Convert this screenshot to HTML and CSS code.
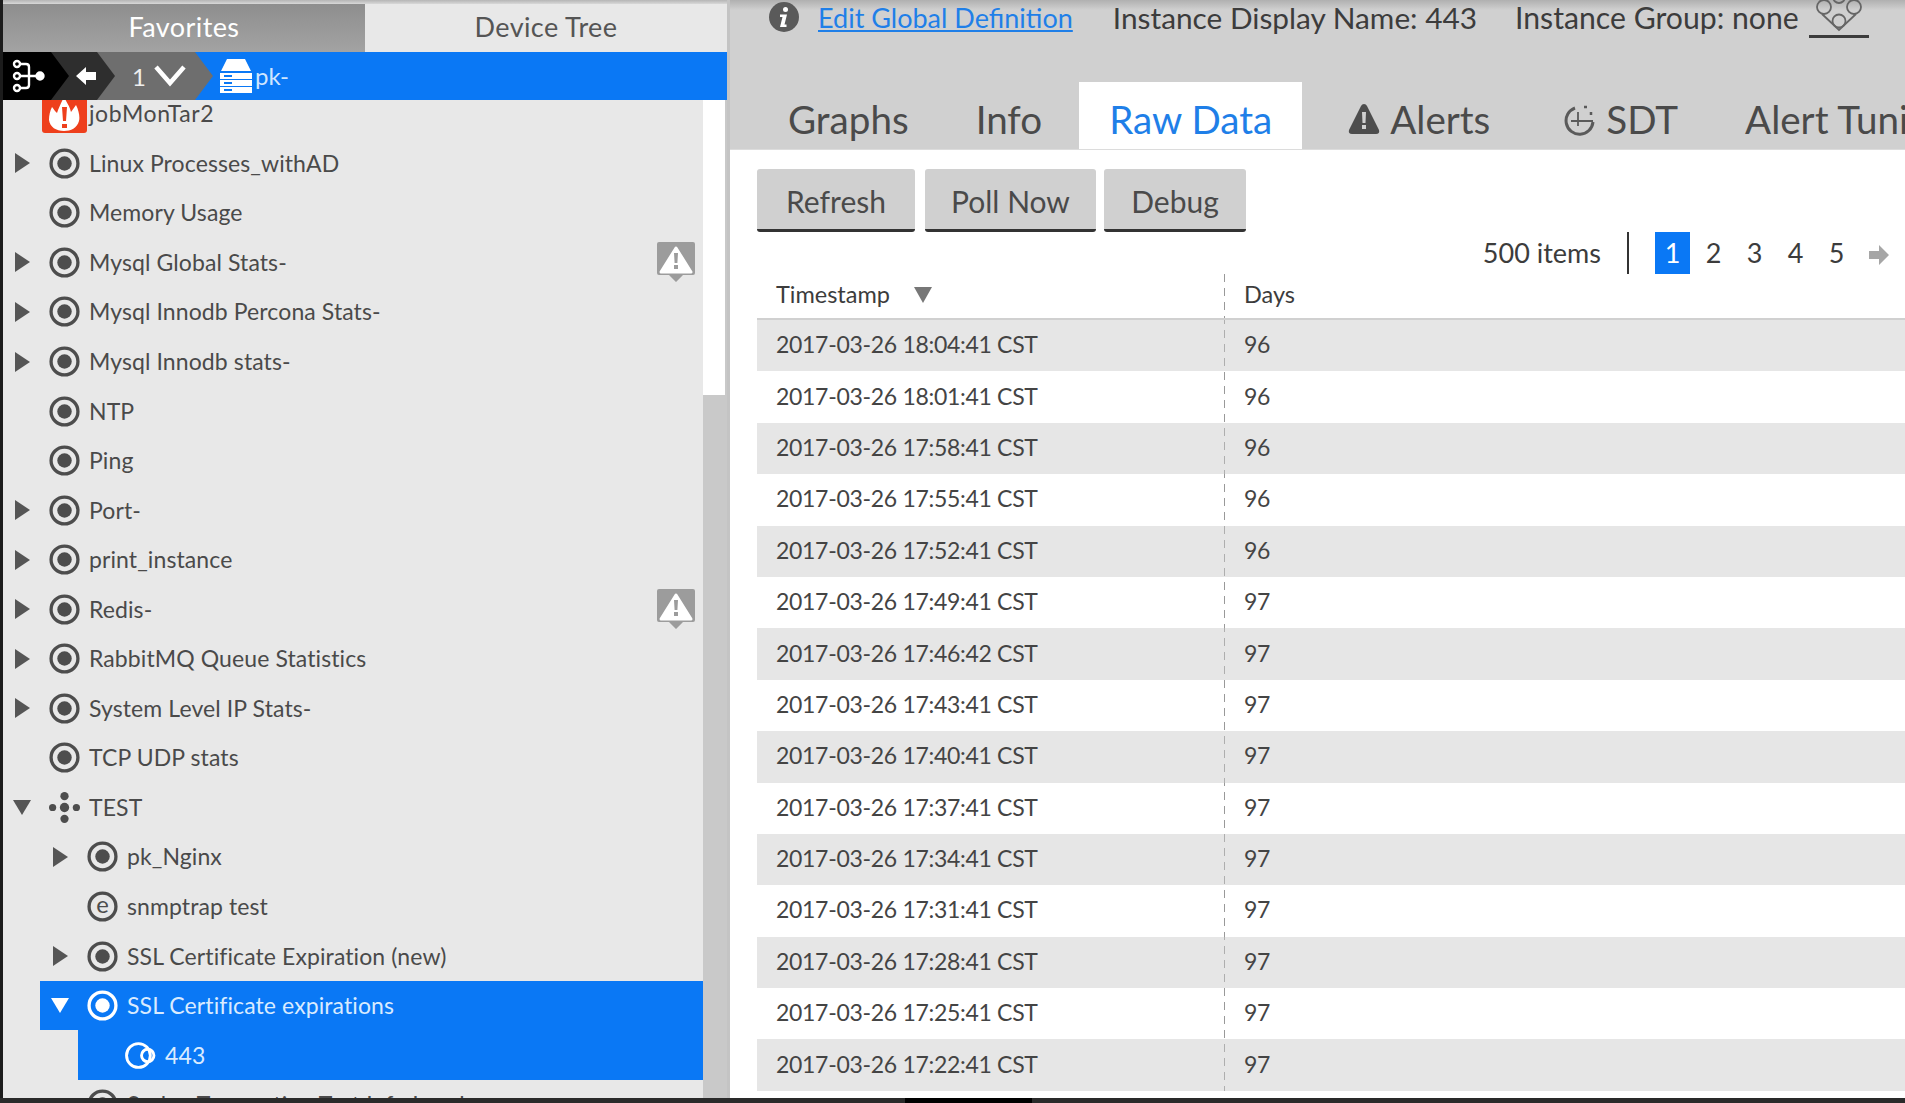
FILE: index.html
```html
<!DOCTYPE html>
<html lang="en">
<head>
    <meta charset="UTF-8">
    <title>Raw Data</title>
    <link rel="stylesheet" href="styles.css">
</head>
<body>
    <svg class="defs" width="0" height="0">
        <symbol id="dp" viewBox="0 0 30 30">
            <circle cx="15" cy="15" r="13" fill="none" stroke="currentColor" stroke-width="3.2"/>
            <circle cx="15" cy="15" r="7" fill="currentColor"/>
        </symbol>
        <symbol id="alert" viewBox="0 0 38 40">
            <path d="M0 2q0-2 2-2h34q2 0 2 2v29q0 2-2 2h-10l-7 7-7-7H2q-2 0-2-2z" fill="#9c9c9c"/>
            <path d="M19 6 34 30H4z" fill="#fff" stroke="#fff" stroke-width="3" stroke-linejoin="round"/>
            <path d="M17 11h4l-.6 10h-2.800zM17 23h4v4h-4z" fill="#9c9c9c"/>
        </symbol>
    </svg>

    <aside class="sidebar">
        <div class="side-tabs">
            <div class="side-tab side-tab-on">Favorites</div>
            <div class="side-tab">Device Tree</div>
        </div>
        <div class="crumbs">
            <div class="crumb crumb-root">
                <svg width="34" height="34" viewBox="0 0 34 34" fill="none" stroke="#fff" stroke-width="2.400">
                    <circle cx="5" cy="5" r="3"/><circle cx="5" cy="17" r="3"/><circle cx="5" cy="29" r="3"/>
                    <path d="M8 5h6q3 0 3 3v18q0 3-3 3H8M8 17h20"/><circle cx="28" cy="17" r="3.500" fill="#fff"/>
                </svg>
            </div>
            <div class="crumb crumb-back">
                <svg width="20" height="20" viewBox="0 0 20 20"><path d="M0 10 10 1v5h10v8H10v5z" fill="#fff"/></svg>
            </div>
            <div class="crumb crumb-count">
                <span>1</span>
                <svg width="32" height="24" viewBox="0 0 32 24"><path d="M2 3 16 19 30 3" fill="none" stroke="#fff" stroke-width="4.500"/></svg>
            </div>
            <div class="crumb-host">
                <svg width="32" height="34" viewBox="0 0 32 34" fill="#fff">
                    <path d="M7 0h18l6 12H1zM0 14h32v6H0zM0 21h32v6H0zM0 28h32v6H0z"/>
                    <path d="M4 16h8v2H4zM4 23h8v2H4zM4 30h8v2H4z" fill="#0a78f5"/>
                </svg>
                <span>pk-</span>
            </div>
        </div>
        <div class="tree-wrap">
            <div class="tree">
                <div class="row row-first">
                    <svg class="fire" width="45" height="38" viewBox="0 0 45 38">
                        <path d="M0 0h45v35q0 3-3 3H3q-3 0-3-3z" fill="#ee3f1c"/>
                        <path d="M10 12C13 16 14 17 15 18 17 12 20 6 22 2 25 8 28 12 29 17L34 10C37 16 38 22 37 26 35 33 29 36 22 36 14 36 8 32 7 25 7 20 8 16 10 12z" fill="#fff"/>
                        <path d="M20 12h5l-1 14h-3zM20 29h5v4h-5z" fill="#ee3f1c"/>
                    </svg>
                    <span class="label label-job">jobMonTar2</span>
                </div>
                <div class="row"><span class="tri"></span><svg class="ico"><use href="#dp"/></svg><span class="label">Linux Processes_withAD</span></div>
                <div class="row"><span class="tri tri-none"></span><svg class="ico"><use href="#dp"/></svg><span class="label">Memory Usage</span></div>
                <div class="row"><span class="tri"></span><svg class="ico"><use href="#dp"/></svg><span class="label">Mysql Global Stats-</span><svg class="flag"><use href="#alert"/></svg></div>
                <div class="row"><span class="tri"></span><svg class="ico"><use href="#dp"/></svg><span class="label">Mysql Innodb Percona Stats-</span></div>
                <div class="row"><span class="tri"></span><svg class="ico"><use href="#dp"/></svg><span class="label">Mysql Innodb stats-</span></div>
                <div class="row"><span class="tri tri-none"></span><svg class="ico"><use href="#dp"/></svg><span class="label">NTP</span></div>
                <div class="row"><span class="tri tri-none"></span><svg class="ico"><use href="#dp"/></svg><span class="label">Ping</span></div>
                <div class="row"><span class="tri"></span><svg class="ico"><use href="#dp"/></svg><span class="label">Port-</span></div>
                <div class="row"><span class="tri"></span><svg class="ico"><use href="#dp"/></svg><span class="label">print_instance</span></div>
                <div class="row"><span class="tri"></span><svg class="ico"><use href="#dp"/></svg><span class="label">Redis-</span><svg class="flag"><use href="#alert"/></svg></div>
                <div class="row"><span class="tri"></span><svg class="ico"><use href="#dp"/></svg><span class="label">RabbitMQ Queue Statistics</span></div>
                <div class="row"><span class="tri"></span><svg class="ico"><use href="#dp"/></svg><span class="label">System Level IP Stats-</span></div>
                <div class="row"><span class="tri tri-none"></span><svg class="ico"><use href="#dp"/></svg><span class="label">TCP UDP stats</span></div>
                <div class="row">
                    <span class="tri tri-down"></span>
                    <svg class="ico" viewBox="0 0 30 30" fill="#4d4d4d">
                        <circle cx="15" cy="4" r="4"/><circle cx="15" cy="26" r="4"/><circle cx="15" cy="15" r="4.500"/>
                        <circle cx="3.500" cy="15" r="3.500"/><circle cx="26.500" cy="15" r="3.500"/>
                    </svg>
                    <span class="label">TEST</span>
                </div>
                <div class="row lvl2"><span class="tri"></span><svg class="ico"><use href="#dp"/></svg><span class="label">pk_Nginx</span></div>
                <div class="row lvl2">
                    <span class="tri tri-none"></span>
                    <svg class="ico" viewBox="0 0 30 30">
                        <circle cx="15" cy="15" r="13" fill="none" stroke="#4d4d4d" stroke-width="3.200"/>
                        <text x="15" y="21" text-anchor="middle" class="ico-e">e</text>
                    </svg>
                    <span class="label">snmptrap test</span>
                </div>
                <div class="row lvl2"><span class="tri"></span><svg class="ico"><use href="#dp"/></svg><span class="label">SSL Certificate Expiration (new)</span></div>
                <div class="row lvl2 row-sel"><span class="tri tri-down"></span><svg class="ico" viewBox="0 0 30 30"><circle cx="15" cy="15" r="13" fill="none" stroke="#fff" stroke-width="3.200"/><circle cx="15" cy="15" r="7" fill="#fff"/></svg><span class="label">SSL Certificate expirations</span></div>
                <div class="row lvl3 row-sel">
                    <svg class="ico" viewBox="0 0 30 30" fill="none" stroke="#fff" stroke-width="2.800">
                        <circle cx="13" cy="15" r="11.500"/><circle cx="22" cy="15" r="6"/>
                    </svg>
                    <span class="label">443</span>
                </div>
                <div class="row lvl2"><span class="tri tri-none"></span><svg class="ico"><use href="#dp"/></svg><span class="label">Syslog Transaction Test Info Level</span></div>
            </div>
            <div class="scroll"><div class="scroll-track"></div></div>
        </div>
    </aside>

    <main class="content">
        <div class="head">
            <div class="head-info">
                <svg class="info-ico" width="30" height="30" viewBox="0 0 30 30">
                    <circle cx="15" cy="15" r="15" fill="#5a5a5a"/>
                    <circle cx="16.500" cy="7.500" r="2.500" fill="#fff"/>
                    <path d="M11 12.500h7l-2.500 10h2v2.500h-6.500l2.500-10h-2.500z" fill="#fff"/>
                </svg>
                <a class="head-link" href="#">Edit Global Definition</a>
                <span class="head-text head-name">Instance Display Name: 443</span>
                <span class="head-text head-group">Instance Group: none</span>
                <span class="group-ico">
                    <svg width="60" height="34" viewBox="0 0 60 34" fill="none" stroke="#666" stroke-width="1.800">
                        <circle cx="30" cy="-3" r="6"/><circle cx="15" cy="7" r="7"/><circle cx="45" cy="7" r="7"/><circle cx="30" cy="21" r="6.500"/>
                        <path d="M13 14 30 30 47 14"/>
                    </svg>
                </span>
            </div>
            <nav class="tabs">
                <div class="tab">Graphs</div>
                <div class="tab">Info</div>
                <div class="tab tab-on">Raw Data</div>
                <div class="tab tab-alerts">
                    <svg width="32" height="30" viewBox="0 0 32 30"><path d="M16 0q2 0 3 2l12 24q1 4-3 4H4q-4 0-3-4L13 2q1-2 3-2z" fill="#4d4d4d"/><path d="M14 8h4l-.5 11h-3zM14 21h4v4h-4z" fill="#d0d0d0"/></svg>
                    Alerts
                </div>
                <div class="tab tab-sdt">
                    <svg width="32" height="34" viewBox="0 0 32 34" fill="none" stroke="#5a5a5a" stroke-width="3">
                        <path d="M11 6A13.500 13.500 0 1 0 29 20"/><path d="M14 10v14M7 19h22" stroke-width="1.800"/><path d="M20 5h3M27 10v3" stroke-width="2.500"/>
                    </svg>
                    SDT
                </div>
                <div class="tab">Alert Tuning</div>
            </nav>
        </div>
        <div class="panel">
            <div class="actions">
                <button class="btn btn-refresh">Refresh</button>
                <button class="btn btn-poll">Poll Now</button>
                <button class="btn btn-debug">Debug</button>
            </div>
            <div class="pager">
                <span class="pager-count">500 items</span>
                <span class="pager-sep"></span>
                <span class="page page-on">1</span>
                <span class="page">2</span>
                <span class="page">3</span>
                <span class="page">4</span>
                <span class="page">5</span>
                <svg class="pager-next" width="20" height="20" viewBox="0 0 20 20"><path d="M0 6h10V0l10 10-10 10v-6H0z" fill="#a6a6a6"/></svg>
            </div>
            <div class="grid">
                <div class="grid-head"><div class="c1">Timestamp <span class="sort"></span></div><div class="c2">Days</div></div>
                <div class="grid-row"><div class="c1">2017-03-26 18:04:41 CST</div><div class="c2">96</div></div>
                <div class="grid-row"><div class="c1">2017-03-26 18:01:41 CST</div><div class="c2">96</div></div>
                <div class="grid-row"><div class="c1">2017-03-26 17:58:41 CST</div><div class="c2">96</div></div>
                <div class="grid-row"><div class="c1">2017-03-26 17:55:41 CST</div><div class="c2">96</div></div>
                <div class="grid-row"><div class="c1">2017-03-26 17:52:41 CST</div><div class="c2">96</div></div>
                <div class="grid-row"><div class="c1">2017-03-26 17:49:41 CST</div><div class="c2">97</div></div>
                <div class="grid-row"><div class="c1">2017-03-26 17:46:42 CST</div><div class="c2">97</div></div>
                <div class="grid-row"><div class="c1">2017-03-26 17:43:41 CST</div><div class="c2">97</div></div>
                <div class="grid-row"><div class="c1">2017-03-26 17:40:41 CST</div><div class="c2">97</div></div>
                <div class="grid-row"><div class="c1">2017-03-26 17:37:41 CST</div><div class="c2">97</div></div>
                <div class="grid-row"><div class="c1">2017-03-26 17:34:41 CST</div><div class="c2">97</div></div>
                <div class="grid-row"><div class="c1">2017-03-26 17:31:41 CST</div><div class="c2">97</div></div>
                <div class="grid-row"><div class="c1">2017-03-26 17:28:41 CST</div><div class="c2">97</div></div>
                <div class="grid-row"><div class="c1">2017-03-26 17:25:41 CST</div><div class="c2">97</div></div>
                <div class="grid-row"><div class="c1">2017-03-26 17:22:41 CST</div><div class="c2">97</div></div>
            </div>
        </div>
    </main>
    <div class="dock"><div class="dock-mid"></div></div>
</body>
</html>
```
FILE: styles.css
```css
html, body {
    margin: 0;
    padding: 0;
    height: 100%;
    overflow: hidden;
}
body {
    position: relative;
    display: flex;
    background: #fff;
    color: #444;
    font-family: Lato, "Open Sans", sans-serif;
}
.defs {
    position: absolute;
}

/* left column */
.sidebar {
    width: 727px;
    height: 1098px;
    flex: none;
    display: flex;
    flex-direction: column;
    border-left: 3px solid #1c1c1c;
    box-sizing: border-box;
    padding-top: 4px;
    background: linear-gradient(#b5b5b5, #d8d8d8 4px) top / 100% 4px no-repeat;
}
.side-tabs {
    display: flex;
    height: 48px;
    flex: none;
}
.side-tab {
    flex: 1;
    display: flex;
    align-items: center;
    justify-content: center;
    padding-bottom: 3px;
    font-size: 27px;
    letter-spacing: 0.4px;
    background: #e8e8e8;
    color: #555;
}
.side-tab-on {
    background: linear-gradient(#8e8e8e, #a3a3a3);
    color: #fff;
}

.crumbs {
    height: 48px;
    flex: none;
    display: flex;
    background: #0a78f5;
    position: relative;
    z-index: 2;
}
.crumb {
    display: flex;
    align-items: center;
    height: 100%;
    flex: none;
    box-sizing: border-box;
    margin-right: -20px;
    clip-path: polygon(0 0, calc(100% - 18px) 0, 100% 50%, calc(100% - 18px) 100%, 0 100%);
}
.crumb-root {
    width: 66px;
    padding-left: 9px;
    background: #000;
    z-index: 3;
}
.crumb-back {
    width: 66px;
    padding-left: 27px;
    background: #2e2e2e;
    z-index: 2;
}
.crumb-count {
    width: 118px;
    padding-left: 37px;
    gap: 8px;
    background: #6e6e6e;
    color: #eee;
    font-size: 24px;
    z-index: 1;
}
.crumb-host {
    display: flex;
    align-items: center;
    margin-left: 27px;
    color: #cfe6ff;
    font-size: 24px;
}
.crumb-host span {
    margin: 0 0 2px 3px;
}

.tree-wrap {
    flex: 1;
    display: flex;
    min-height: 0;
}
.tree {
    width: 700px;
    flex: none;
    overflow: hidden;
    background: #e8e8e8;
}
.row {
    display: flex;
    align-items: center;
    height: 49.550px;
    padding-left: 12px;
    box-sizing: border-box;
    font-size: 23px;
    letter-spacing: 0.1px;
    color: #4a4a4a;
}
.row-first {
    margin-top: -11px;
    padding-left: 39px;
}
.fire {
    flex: none;
    margin-right: 2px;
}
.label-job {
    letter-spacing: 0.6px;
}
.tri {
    width: 0;
    height: 0;
    flex: none;
    border-left: 15px solid #555;
    border-top: 10px solid transparent;
    border-bottom: 10px solid transparent;
    margin-right: 19px;
}
.tri-none {
    border-left-color: transparent;
}
.tri-down {
    border-top: 15px solid #555;
    border-left: 9px solid transparent;
    border-right: 9px solid transparent;
    border-bottom: 0;
    margin-left: -2px;
    margin-right: 18px;
}
.ico {
    width: 31px;
    height: 31px;
    flex: none;
    color: #4d4d4d;
    margin-right: 9px;
}
.ico-e {
    font-size: 23px;
    fill: #4d4d4d;
}
.label {
    white-space: nowrap;
    padding-bottom: 1px;
}
.flag {
    width: 38px;
    height: 40px;
    margin-left: auto;
    margin-right: 8px;
}
.lvl2 {
    padding-left: 50px;
}
.lvl3 {
    margin-left: 75px;
    padding-left: 47px;
}
.row-sel {
    background: #0a78f5;
    color: #d9ebff;
}
.lvl2.row-sel {
    margin-left: 37px;
    padding-left: 13px;
}
.row-sel .tri-down {
    border-top-color: #fff;
}

.scroll {
    flex: 1;
    display: flex;
    flex-direction: column;
    background: #c9c9c9;
}
.scroll-track {
    height: 295px;
    background: #fff;
    border-right: 2px solid #c9c9c9;
}

/* right column */
.content {
    flex: 1;
    min-width: 0;
    height: 1098px;
    display: flex;
    flex-direction: column;
    border-left: 3px solid #c4c4c4;
    box-sizing: border-box;
}
.head {
    height: 150px;
    flex: none;
    display: flex;
    flex-direction: column;
    justify-content: space-between;
    background: linear-gradient(#b0b0b0, #d0d0d0 10px);
    border-bottom: 1px solid #dcdcdc;
    box-sizing: border-box;
}
.head-info {
    display: flex;
    align-items: center;
    height: 34px;
    padding-left: 39px;
    font-size: 27px;
    white-space: nowrap;
}
.info-ico {
    margin-right: 19px;
}
.head-link {
    color: #1f7fe8;
}
.head-text {
    color: #3c3c3c;
    font-size: 29.800px;
}
.head-name {
    margin-left: 40px;
}
.head-group {
    margin-left: 38px;
    font-size: 30.200px;
}
.group-ico {
    margin-left: 10px;
    height: 38px;
    width: 60px;
    border-bottom: 3px solid #3c3c3c;
    box-sizing: border-box;
    align-self: flex-start;
}
.group-ico svg {
    display: block;
}
.tabs {
    display: flex;
    gap: 7px;
    height: 67px;
    padding-left: 28px;
    white-space: nowrap;
    overflow: hidden;
}
.tab {
    display: flex;
    align-items: center;
    gap: 10px;
    padding: 6px 30px 0;
    font-size: 38.600px;
    color: #4a4a4a;
}
.tab-on {
    background: #fff;
    color: #1f7fe8;
}
.tab-alerts {
    padding-left: 39px;
}
.tab-sdt {
    padding-left: 37px;
}

.panel {
    flex: 1;
    min-height: 0;
    overflow: hidden;
    padding: 19px 0 0 27px;
}
.actions {
    display: flex;
    gap: 8px;
}
.btn {
    height: 63px;
    padding: 3px 0 0;
    border: 0;
    border-bottom: 3px solid #333;
    border-radius: 3px;
    background: #d0d0d0;
    color: #4a4a4a;
    font: 30px Lato, "Open Sans", sans-serif;
}
.btn-refresh {
    width: 158px;
    margin-right: 2px;
}
.btn-poll {
    width: 171px;
}
.btn-debug {
    width: 142px;
}
.pager {
    display: flex;
    align-items: center;
    height: 42px;
    margin-right: 16px;
    justify-content: flex-end;
    font-size: 27px;
    color: #3c3c3c;
}
.pager-count {
    padding-bottom: 2px;
}
.pager-sep {
    width: 2px;
    height: 42px;
    background: #333;
    margin: 0 26px;
}
.page {
    width: 35px;
    height: 42px;
    display: flex;
    align-items: center;
    justify-content: center;
    margin-right: 6px;
    padding-bottom: 2px;
    box-sizing: border-box;
}
.page-on {
    background: #0a78f5;
    color: #fff;
}
.pager-next {
    margin: 4px 0 0 9px;
}
.grid {
    background: repeating-linear-gradient(#999 0 8px, transparent 8px 14px) 467px 0 / 1px 100% no-repeat;
}
.grid-head, .grid-row {
    display: flex;
    align-items: center;
    font-size: 23px;
    height: 51.400px;
    padding-bottom: 3px;
    box-sizing: border-box;
}
.grid-head {
    height: 46px;
    padding-bottom: 4px;
    font-size: 23.500px;
    border-bottom: 2px solid #d0d0d0;
    color: #3c3c3c;
}
.grid-row {
    letter-spacing: -0.3px;
}
.grid-row:nth-child(even) {
    background: rgba(200, 200, 200, 0.45);
}
.c1 {
    width: 467px;
    padding-left: 19px;
    box-sizing: border-box;
    flex: none;
}
.c2 {
    padding-left: 20px;
}
.sort {
    display: inline-block;
    border-top: 16px solid #777;
    border-left: 9px solid transparent;
    border-right: 9px solid transparent;
    margin-left: 18px;
}

.dock {
    position: absolute;
    left: 0;
    right: 0;
    bottom: 0;
    height: 5px;
    background: #2a2a2a;
}
.dock-mid {
    width: 127px;
    height: 5px;
    margin-left: 905px;
    background: #000;
}
```
